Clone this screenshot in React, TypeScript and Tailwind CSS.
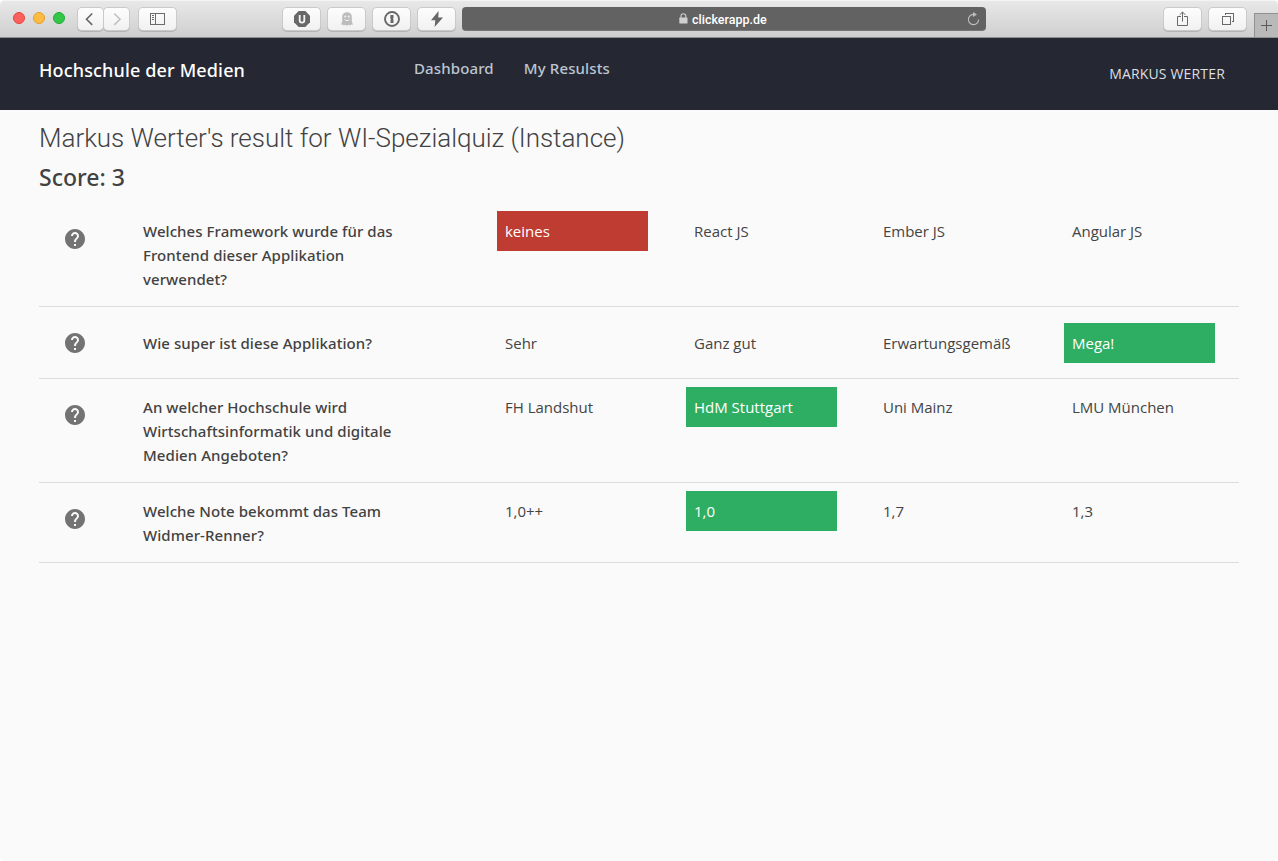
import type { ReactNode } from 'react';

type Result = 'wrong' | 'right' | null;
type Question = { lines: string[]; answers: string[]; picked: number; result: Result };

const questions: Question[] = [
  {
    lines: ['Welches Framework wurde für das', 'Frontend dieser Applikation', 'verwendet?'],
    answers: ['keines', 'React JS', 'Ember JS', 'Angular JS'],
    picked: 0,
    result: 'wrong',
  },
  {
    lines: ['Wie super ist diese Applikation?'],
    answers: ['Sehr', 'Ganz gut', 'Erwartungsgemäß', 'Mega!'],
    picked: 3,
    result: 'right',
  },
  {
    lines: ['An welcher Hochschule wird', 'Wirtschaftsinformatik und digitale', 'Medien Angeboten?'],
    answers: ['FH Landshut', 'HdM Stuttgart', 'Uni Mainz', 'LMU München'],
    picked: 1,
    result: 'right',
  },
  {
    lines: ['Welche Note bekommt das Team', 'Widmer-Renner?'],
    answers: ['1,0++', '1,0', '1,7', '1,3'],
    picked: 1,
    result: 'right',
  },
];

function ToolButton({ className, children }: { className: string; children: ReactNode }) {
  return (
    <div
      className={`flex h-[22px] items-center justify-center rounded-[4px] bg-linear-to-b from-[#fdfdfd] to-[#f1f1f1] shadow-[0_0_0_1px_#cacaca,0_1px_0_1px_#b4b4b4] ${className}`}
    >
      {children}
    </div>
  );
}

function Toolbar() {
  return (
    <div className="flex h-[38px] items-start overflow-hidden border-t border-b border-t-[#f4f4f4] border-b-[#8f8f8f] bg-linear-to-b from-[#e8e8e8] to-[#cfcfcf]">
      <div className="mt-[11px] ml-[13px] flex gap-2">
        <span className="size-3 rounded-full border border-[#e2463f] bg-[#fc605c]" />
        <span className="size-3 rounded-full border border-[#e0a033] bg-[#fdbc40]" />
        <span className="size-3 rounded-full border border-[#24ab35] bg-[#33c748]" />
      </div>
      <div className="mt-[7px] ml-[13px] flex gap-px">
        <ToolButton className="w-[25px]">
          <svg width="25" height="22" viewBox="0 0 25 22" fill="none" stroke="#676767" strokeWidth="1.6">
            <path d="M14.2 5.5 8.5 11.2l5.7 5.7" />
          </svg>
        </ToolButton>
        <ToolButton className="w-[25px]">
          <svg width="25" height="22" viewBox="0 0 25 22" fill="none" stroke="#c1c1c1" strokeWidth="1.6">
            <path d="m10.3 5.5 5.7 5.7-5.7 5.7" />
          </svg>
        </ToolButton>
      </div>
      <ToolButton className="mt-[7px] ml-[10px] w-[37px]">
        <svg width="15" height="12" viewBox="0 0 15 12" fill="none" stroke="#6b6b6b" shapeRendering="crispEdges">
          <path d="M.5.5h14v11H.5zM5.5 0v12M2 2.5h2M2 4.5h2M2 6.5h2" />
        </svg>
      </ToolButton>

      <div className="mt-[7px] ml-[107px] flex gap-2">
        <ToolButton className="w-[37px]">
          <svg width="16" height="16" viewBox="0 0 16 16">
            <path fill="#686868" d="M4.7 0h6.6L16 4.7v6.6L11.3 16H4.7L0 11.3V4.7z" />
            <path fill="none" stroke="#f5f5f5" strokeWidth="1.8" d="M5.7 4v5.2c0 1.5.8 2.4 2.3 2.4s2.3-.9 2.3-2.4V4" />
          </svg>
        </ToolButton>
        <ToolButton className="w-[37px]">
          <svg width="14" height="14" viewBox="0 0 14 14">
            <path
              fill="#bcbcbc"
              d="M2.2 5C2.2 1.8 4.2.3 7 .3S11.8 1.8 11.8 5v4.5l1.2 3.2-1.7-.2-1.2 1.1-1.5-.8L7 13.7l-1.6-.9-1.5.8-1.2-1.1-1.7.2 1.2-3.2z"
            />
            <circle cx="5.3" cy="4.4" r="1" fill="#f5f5f5" />
            <circle cx="8.7" cy="4.4" r="1" fill="#f5f5f5" />
            <path d="M4.4 7.2c1.2 1.9 4 1.9 5.2 0" fill="none" stroke="#f5f5f5" />
          </svg>
        </ToolButton>
        <ToolButton className="w-[37px]">
          <svg className="ml-px" width="16" height="16" viewBox="0 0 16 16">
            <circle cx="8" cy="8" r="7" fill="none" stroke="#686868" strokeWidth="1.9" />
            <path fill="#686868" d="M6.3 4h3.2v3l-.6.8.6.8V12H6.5V9l.6-.8-.8-.8z" />
          </svg>
        </ToolButton>
        <ToolButton className="w-[37px]">
          <svg width="14" height="16" viewBox="0 0 14 16">
            <path fill="#676767" d="M8.6 0 1 9.2h4.3L4.6 16 13 6.4H8.3z" />
          </svg>
        </ToolButton>
      </div>

      <div className="mt-[6px] ml-[7px] flex h-6 w-[524px] items-center rounded-[4px] border-b border-[#777] bg-[#626262] pr-1.5 pl-[217px] text-white">
        <svg width="9" height="11" viewBox="0 0 9 11">
          <rect y="4.6" x=".3" width="8.2" height="6" rx=".6" fill="#cfcfcf" />
          <path d="M2 5V3c0-3 4.8-3 4.8 0v2" fill="none" stroke="#cfcfcf" strokeWidth="1.1" />
        </svg>
        <span className="ml-1 pt-0.5 font-[Roboto,sans-serif] text-[12.5px] leading-6 font-medium">clickerapp.de</span>
        <svg className="ml-auto" width="13" height="14" viewBox="0 0 13 14">
          <path d="M7.5 2.4H6.2A5.1 5.1 0 1 0 11.6 7.4" fill="none" stroke="#bdbdbd" strokeWidth="1.1" />
          <path d="M6 0v5l4-2.4z" fill="#bdbdbd" />
        </svg>
      </div>

      <div className="mt-[7px] ml-[178px] flex gap-2">
        <ToolButton className="w-[37px]">
          <svg className="ml-px" width="12" height="16" viewBox="0 0 12 16" fill="none" stroke="#686868">
            <path d="M4 5.5H.5v9h10v-9H7M5.5 10.5V1M2.7 3.8 5.5 1l2.8 2.8" />
          </svg>
        </ToolButton>
        <ToolButton className="w-[37px]">
          <svg width="12" height="12" viewBox="0 0 12 12" fill="none" stroke="#686868" shapeRendering="crispEdges">
            <path d="M.5 3.5h8v8h-8zM3.5 2V.5h8v8H10" />
          </svg>
        </ToolButton>
      </div>
      <div className="mt-3 ml-2 flex h-6 w-6 items-center justify-center border-t border-l border-[#929292] bg-[#b9b9b9]">
        <svg width="11" height="11" viewBox="0 0 11 11" stroke="#595959" shapeRendering="crispEdges">
          <path d="M5.5 0v11M0 5.5h11" />
        </svg>
      </div>
    </div>
  );
}

function AppHeader() {
  return (
    <header className="flex h-[72px] bg-[#252833] pr-[53px] pl-[39px]">
      <div className="w-[375px] pt-5 font-['Noto_Sans',sans-serif] text-[18px] leading-6 font-medium tracking-[0.15px] text-white">
        Hochschule der Medien
      </div>
      <nav className="flex gap-[30px] pt-[18px] font-['Noto_Sans',sans-serif] text-[15px] leading-6 font-medium tracking-[0.13px] text-[#bcc5d0]">
        <a>Dashboard</a>
        <a>My Resulsts</a>
      </nav>
      <div className="ml-auto pt-6 font-['Open_Sans',sans-serif] text-[14px] leading-6 tracking-[0.17px] text-[#dedfe1]">
        MARKUS WERTER
      </div>
    </header>
  );
}

function QuestionRow({ question }: { question: Question }) {
  const single = question.lines.length === 1;
  return (
    <div className="flex min-h-[72px] border-b border-[#dcdcdc]">
      <svg className="mt-6 ml-6 shrink-0" width="24" height="24" viewBox="0 0 24 24" fill="#737373">
        <path d="M12 2C6.48 2 2 6.48 2 12s4.48 10 10 10 10-4.48 10-10S17.52 2 12 2zm1 17h-2v-2h2v2zm2.07-7.75l-.9.92C13.45 12.9 13 13.5 13 15h-2v-.5c0-1.1.45-2.1 1.17-2.83l1.24-1.26c.37-.36.59-.86.59-1.41 0-1.1-.9-2-2-2s-2 .9-2 2H8c0-2.21 1.79-4 4-4s4 1.79 4 4c0 .88-.36 1.68-.93 2.25z" />
      </svg>
      <div
        className={`ml-14 w-[354px] pb-[15px] font-['Noto_Sans',sans-serif] text-[15px] leading-6 font-medium tracking-[0.07px] text-[#424242] ${single ? 'pt-6' : 'pt-4'}`}
      >
        {question.lines.map((line) => (
          <div key={line}>{line}</div>
        ))}
      </div>
      <div
        className={`grid grid-cols-[repeat(4,151px)] gap-x-[38px] font-['Open_Sans',sans-serif] text-[15px] leading-6 ${single ? 'pt-4' : 'pt-2'}`}
      >
        {question.answers.map((answer, i) => {
          const tone =
            i !== question.picked
              ? 'text-[#444444]'
              : question.result === 'wrong'
                ? 'bg-[#bf3c33] text-white'
                : 'bg-[#2dae62] text-white';
          return (
            <div key={answer} className={`h-10 py-2 pl-2 tracking-[-0.01px] ${tone}`}>
              {answer}
            </div>
          );
        })}
      </div>
    </div>
  );
}

export default function App() {
  return (
    <div className="h-[861px] w-[1278px] overflow-hidden bg-white">
      <div className="h-full overflow-hidden rounded-[5px] bg-[#fafafa]">
        <Toolbar />
        <AppHeader />
        <main className="px-[39px] text-[#424242]">
          <h1 className="pt-3 font-[Roboto,sans-serif] text-[26px] leading-8 font-light tracking-[-0.02px]">
            Markus Werter's result for WI-Spezialquiz (Instance)
          </h1>
          <h2 className="mt-[7px] mb-2.5 font-['Noto_Sans',sans-serif] text-[23px] leading-8 font-medium">Score: 3</h2>
          {questions.map((question) => (
            <QuestionRow key={question.lines[0]} question={question} />
          ))}
        </main>
      </div>
    </div>
  );
}
